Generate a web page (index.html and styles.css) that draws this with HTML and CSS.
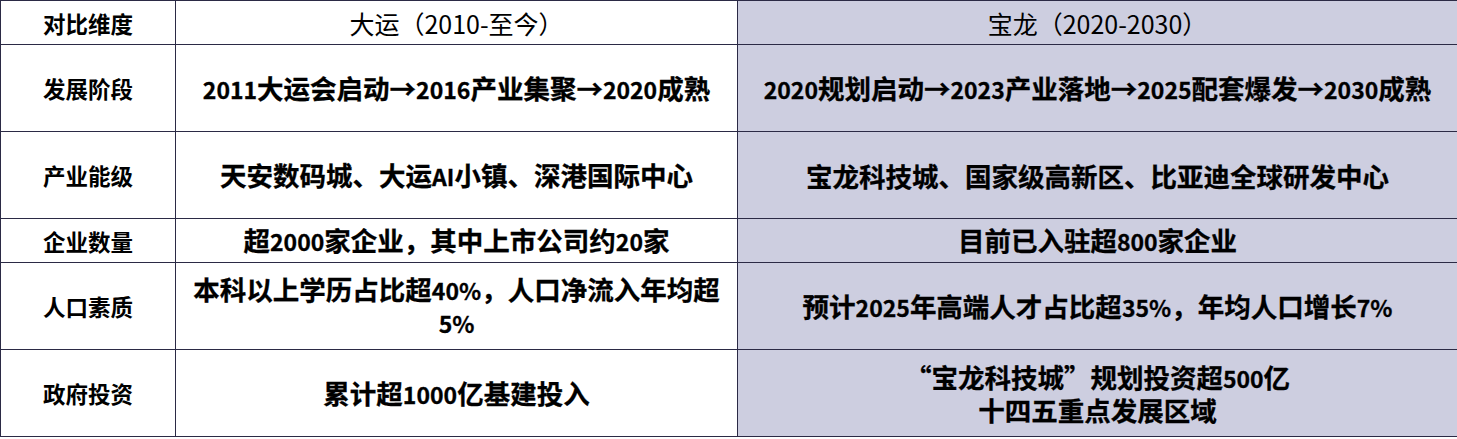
FILE: index.html
```html
<!DOCTYPE html>
<html lang="zh-CN">
<head>
<meta charset="utf-8">
<link rel="stylesheet" href="styles.css">
</head>
<body>
<table class="cmp">
  <colgroup>
    <col class="c1"><col class="c2"><col class="c3">
  </colgroup>
  <tr class="r-head">
    <th class="label">对比维度</th>
    <th class="head">大运（2010-至今）</th>
    <th class="head alt">宝龙（2020-2030）</th>
  </tr>
  <tr class="r-tall">
    <td class="label">发展阶段</td>
    <td class="val"><span class="n">2011</span>大运会启动→<span class="n">2016</span>产业集聚→<span class="n">2020</span>成熟</td>
    <td class="val alt"><span class="n">2020</span>规划启动→<span class="n">2023</span>产业落地→<span class="n">2025</span>配套爆发→<span class="n">2030</span>成熟</td>
  </tr>
  <tr class="r-tall">
    <td class="label">产业能级</td>
    <td class="val">天安数码城、大运<span class="n">AI</span>小镇、深港国际中心</td>
    <td class="val alt">宝龙科技城、国家级高新区、比亚迪全球研发中心</td>
  </tr>
  <tr class="r-short">
    <td class="label">企业数量</td>
    <td class="val">超<span class="n">2000</span>家企业，其中上市公司约<span class="n">20</span>家</td>
    <td class="val alt">目前已入驻超<span class="n">800</span>家企业</td>
  </tr>
  <tr class="r-tall">
    <td class="label">人口素质</td>
    <td class="val">本科以上学历占比超<span class="n">40%</span>，人口净流入年均超<br><span class="n">5%</span></td>
    <td class="val alt">预计<span class="n">2025</span>年高端人才占比超<span class="n">35%</span>，年均人口增长<span class="n">7%</span></td>
  </tr>
  <tr class="r-tall">
    <td class="label">政府投资</td>
    <td class="val">累计超<span class="n">1000</span>亿基建投入</td>
    <td class="val alt">“宝龙科技城”规划投资超<span class="n">500</span>亿<br>十四五重点发展区域</td>
  </tr>
</table>
</body>
</html>
```

FILE: styles.css
```css
html, body {
  margin: 0;
  padding: 0;
  background: #ffffff;
}
body {
  font-family: "Noto Sans CJK SC", "Noto Sans", sans-serif;
  color: #000;
}
.cmp {
  border-collapse: collapse;
  table-layout: fixed;
  width: 1457px;
}
.c1 { width: 175px; }
.c2 { width: 562px; }
.c3 { width: 720px; }
.cmp th, .cmp td {
  border: 1.5px solid #2b2a45;
  padding: 0 4px;
  text-align: center;
  vertical-align: middle;
  overflow: hidden;
}
.r-head { height: 44px; }
.r-tall { height: 87px; }
.r-short { height: 44px; }
.label {
  font-size: 22.5px;
  font-weight: 700;
  line-height: 30px;
}
.head {
  font-size: 25px;
  font-weight: 400;
  line-height: 30px;
}
.val {
  font-size: 26.5px;
  font-weight: 700;
  line-height: 31px;
  -webkit-text-stroke: 0.3px #000;
}
.n {
  font-size: 23px;
}
.alt {
  background: #cdcee0;
}
```
